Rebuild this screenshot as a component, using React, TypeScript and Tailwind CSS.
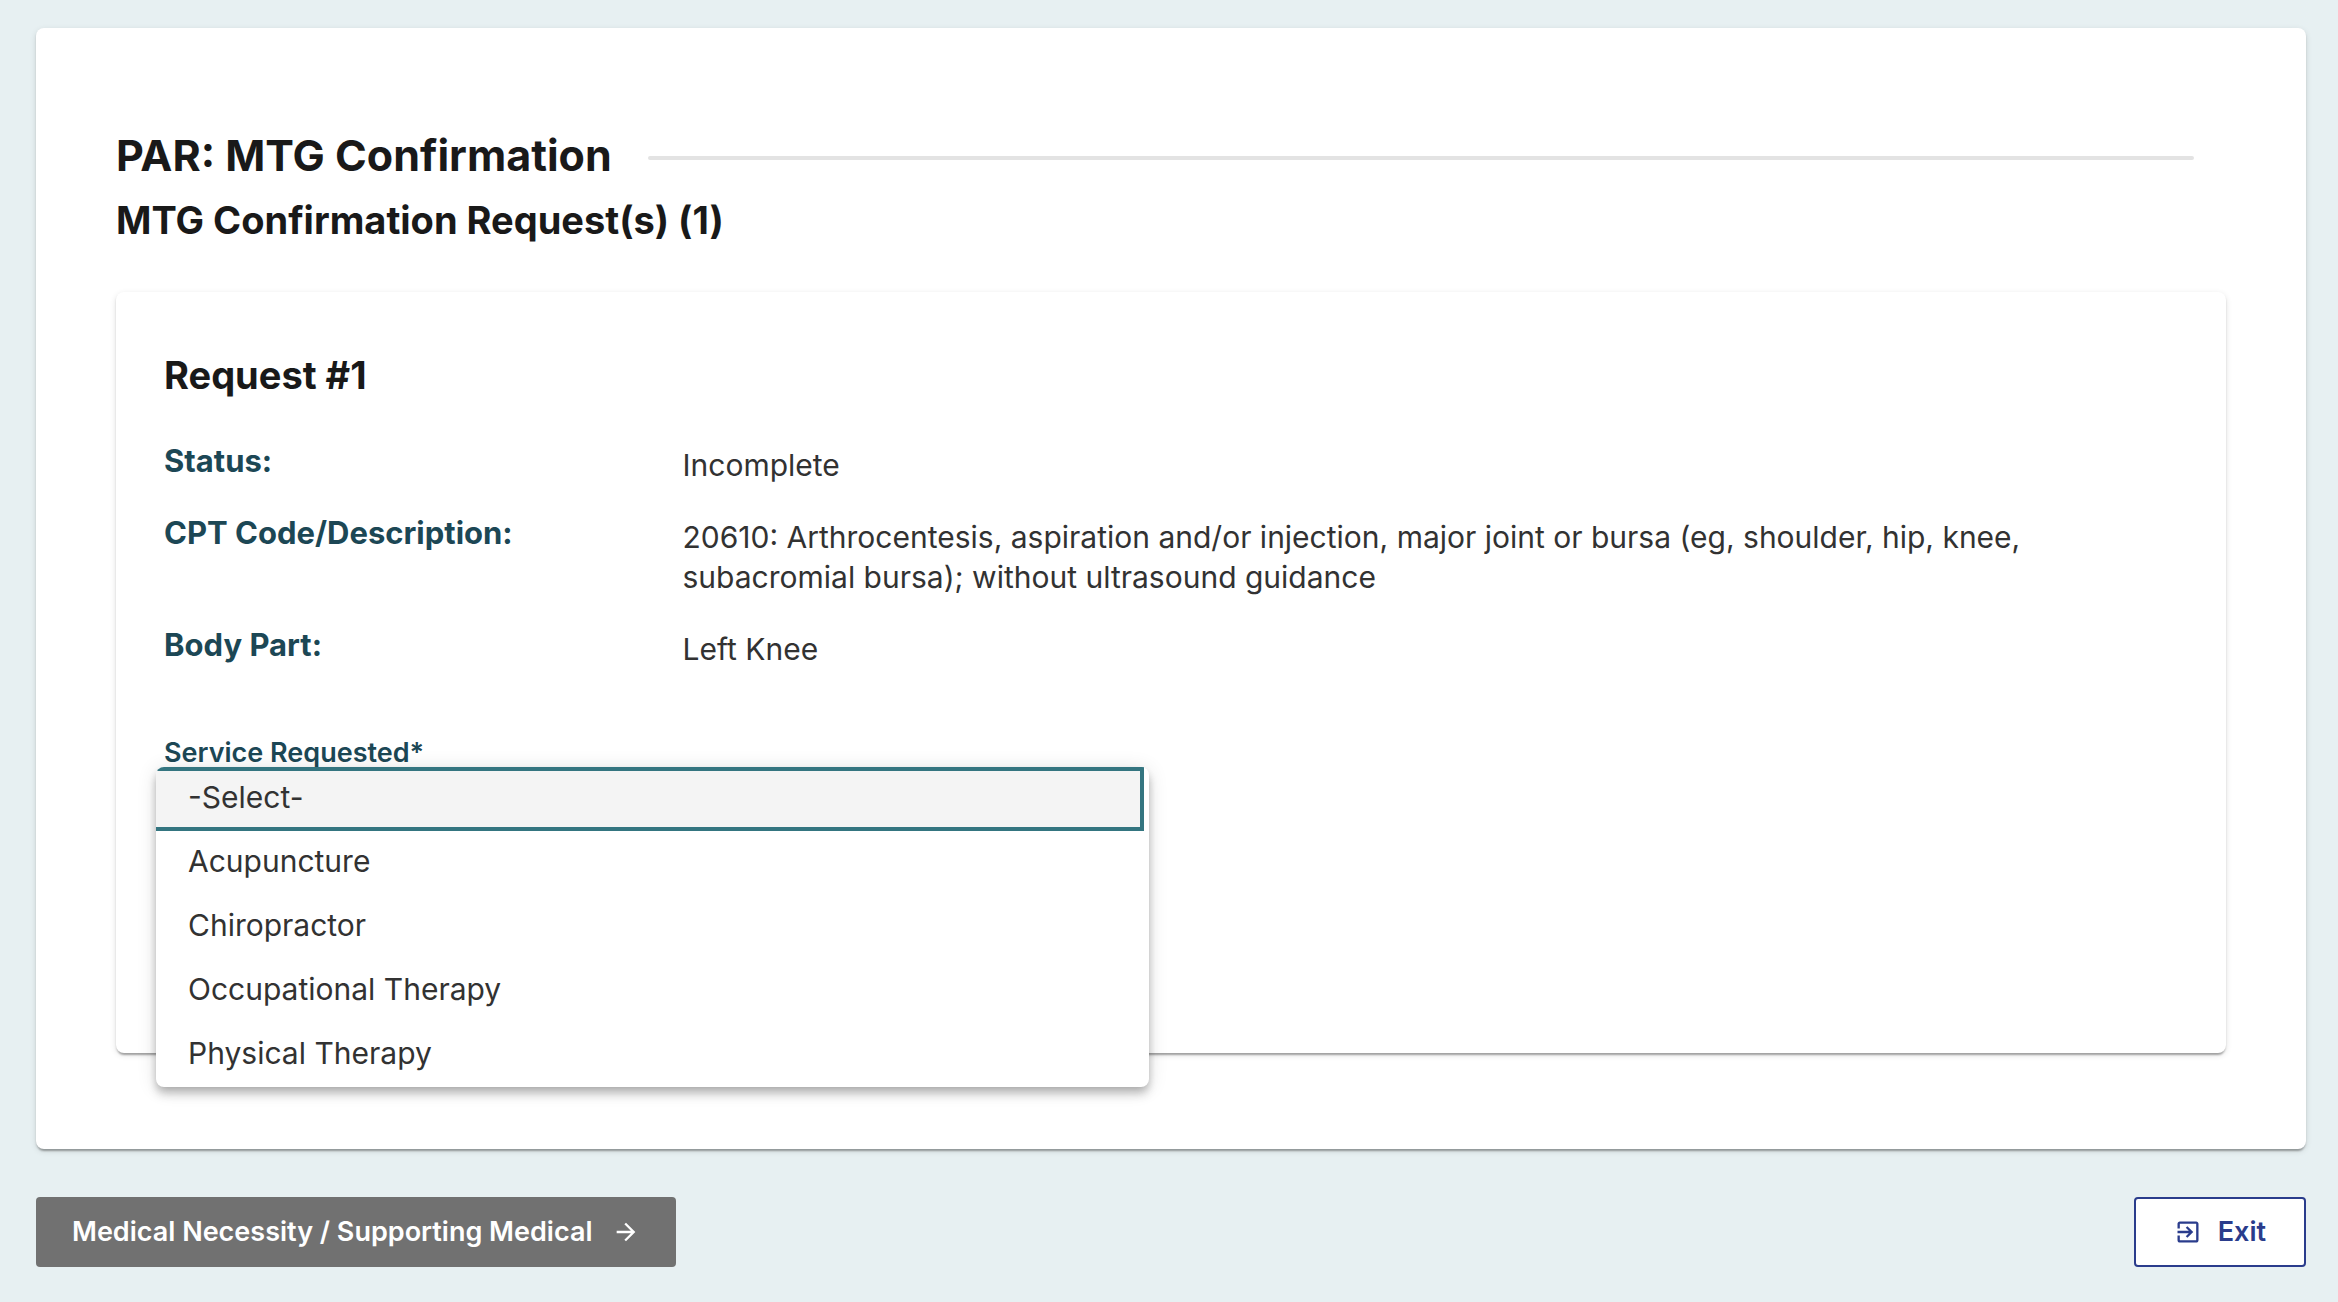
import React from "react";

const details = [
  { label: "Status:", value: "Incomplete" },
  {
    label: "CPT Code/Description:",
    value:
      "20610: Arthrocentesis, aspiration and/or injection, major joint or bursa (eg, shoulder, hip, knee, subacromial bursa); without ultrasound guidance",
  },
  { label: "Body Part:", value: "Left Knee" },
];

const services = ["-Select-", "Acupuncture", "Chiropractor", "Occupational Therapy", "Physical Therapy"];

function ArrowIcon() {
  return (
    <svg viewBox="0 0 24 24" className="size-7" fill="currentColor" aria-hidden="true">
      <path d="M12 4l-1.41 1.41L16.17 11H4v2h12.17l-5.58 5.59L12 20l8-8z" />
    </svg>
  );
}

function ExitIcon() {
  return (
    <svg viewBox="0 0 24 24" className="size-7" fill="currentColor" aria-hidden="true">
      <path d="M10.09 15.59L11.5 17l5-5-5-5-1.41 1.41L12.67 11H3v2h9.67l-2.58 2.59zM19 3H5c-1.11 0-2 .9-2 2v4h2V5h14v14H5v-4H3v4c0 1.1.89 2 2 2h14c1.1 0 2-.9 2-2V5c0-1.1-.9-2-2-2z" />
    </svg>
  );
}

function ServiceField() {
  const [selected, setSelected] = React.useState(services[0]);
  return (
    <div className="mt-[66px] w-[calc(50%-30px)]">
      <label htmlFor="service" className="block text-[27px] leading-9 font-semibold text-[#1c4755]">
        Service Requested*
      </label>
      <div className="relative">
        <select
          id="service"
          value={selected}
          onChange={(e) => setSelected(e.target.value)}
          className="block h-16 w-full rounded border border-gray-400 bg-white px-6 text-[30px]"
        >
          {services.map((s) => (
            <option key={s}>{s}</option>
          ))}
        </select>
        <ul
          role="listbox"
          aria-label="Service Requested"
          className="absolute -top-1 -right-2 -left-2 z-10 overflow-hidden rounded-lg bg-white text-[30px] text-[#323232] shadow-[0_4px_8px_-2px_rgba(0,0,0,0.2),0_8px_10px_0_rgba(0,0,0,0.14),0_2px_20px_0_rgba(0,0,0,0.12)]"
        >
          {services.map((s) => (
            <li
              key={s}
              role="option"
              aria-selected={s === selected}
              onClick={() => setSelected(s)}
              className={
                s === selected
                  ? "mr-[5px] flex h-16 items-center border-y-4 border-r-4 border-[#347580] bg-[#f4f4f4] pb-1 pl-8"
                  : "flex h-16 items-center pb-1 pl-8"
              }
            >
              {s}
            </li>
          ))}
        </ul>
      </div>
    </div>
  );
}

export default function App() {
  return (
    <div className="min-h-screen bg-[#e7f0f2] pt-7 pr-8 pb-9 pl-9 font-['Inter',sans-serif]">
      <main className="rounded-lg bg-white px-20 pt-[103px] pb-24 shadow-[0_4px_2px_-2px_rgba(0,0,0,0.2),0_2px_2px_0_rgba(0,0,0,0.14),0_2px_6px_0_rgba(0,0,0,0.12)]">
        <div className="flex items-center gap-9 pr-8">
          <h1 className="text-[43px] leading-12 font-bold text-[#191919]">PAR: MTG Confirmation</h1>
          <div className="mt-1.5 h-1 flex-1 rounded-xs bg-[#e3e3e3]" />
        </div>
        <h2 className="mt-[17px] text-[38px] leading-12 font-bold text-[#191919]">MTG Confirmation Request(s) (1)</h2>

        <section className="mt-12 rounded-lg bg-white px-12 pt-[59px] pb-[218px] shadow-[0_4px_2px_-2px_rgba(0,0,0,0.2),0_2px_2px_0_rgba(0,0,0,0.14),0_2px_6px_0_rgba(0,0,0,0.12)]">
          <h3 className="text-[38px] leading-12 font-bold text-[#191919]">Request #1</h3>
          <dl className="mt-[46px] space-y-8">
            {details.map((d) => (
              <div key={d.label} className="grid grid-cols-[1fr_3fr] gap-x-5">
                <dt className="text-[31px] leading-8 font-bold text-[#1c4755]">{d.label}</dt>
                <dd className="max-w-[1400px] text-[30px] leading-10 text-[#323232]">{d.value}</dd>
              </div>
            ))}
          </dl>
          <ServiceField />
        </section>
      </main>

      <div className="mt-12 flex items-center justify-between">
        <button
          type="button"
          className="flex h-[70px] items-center gap-5 rounded bg-[#717171] px-9 text-[27px] font-semibold text-white"
        >
          Medical Necessity / Supporting Medical
          <ArrowIcon />
        </button>
        <button
          type="button"
          className="flex h-[70px] items-center gap-4 rounded border-2 border-[#2a3c8c] bg-white px-[38px] text-[27px] font-semibold text-[#2a3c8c]"
        >
          <ExitIcon />
          Exit
        </button>
      </div>
    </div>
  );
}
